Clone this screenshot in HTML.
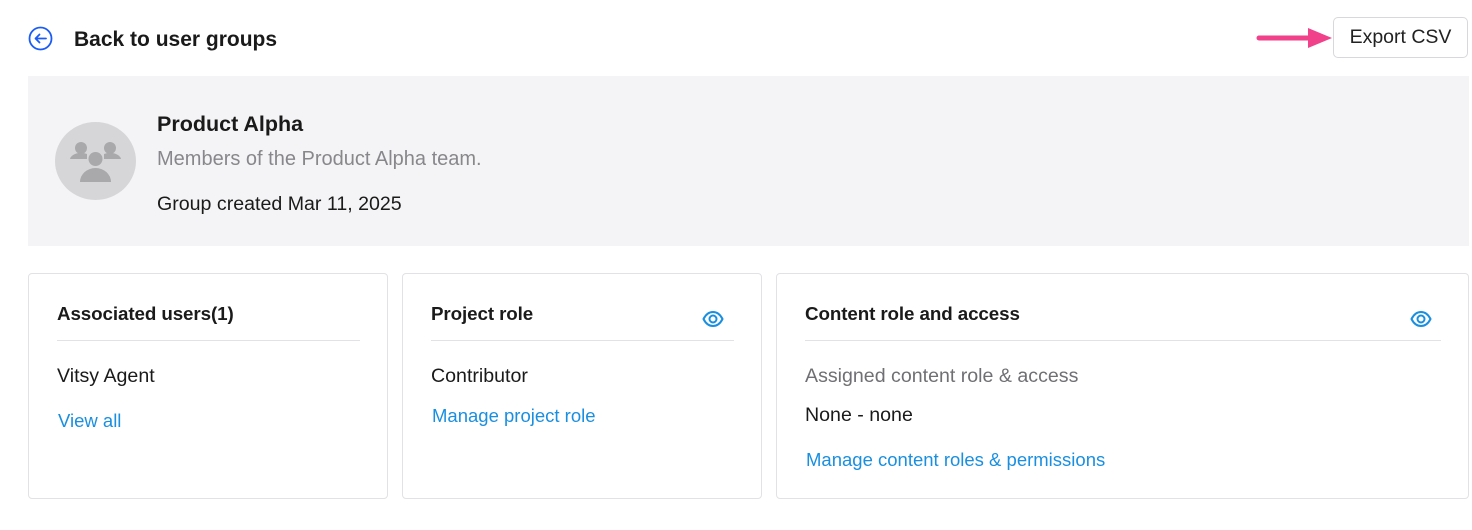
<!DOCTYPE html>
<html><head><style>
body{margin:0;width:1472px;height:530px;background:#fff;font-family:"Liberation Sans",sans-serif;color:#1a1a1a;position:relative;overflow:hidden}
.a{position:absolute}
.card{position:absolute;top:273px;height:226px;border:1px solid #e2e2e6;border-radius:4px;box-sizing:border-box;background:#fff}
.ct{position:absolute;left:28px;top:29px;font-size:18.8px;font-weight:bold;color:#1a1a1a;letter-spacing:-0.1px}
.hr{position:absolute;left:28px;right:27px;top:66px;border-top:1px solid #e2e2e6}
.t{position:absolute;font-size:19.6px}
.lk{position:absolute;font-size:18.5px;color:#1a8fe0}
.eye{position:absolute;top:36px}
</style></head><body>
<svg class="a" style="left:28px;top:26px" width="25" height="25" viewBox="0 0 25 25"><circle cx="12.5" cy="12.5" r="11" fill="none" stroke="#1b5cf5" stroke-width="1.8"/><path d="M18 12.5H7.5M11.5 8.5l-4 4 4 4" fill="none" stroke="#1b5cf5" stroke-width="1.8" stroke-linecap="round" stroke-linejoin="round"/></svg>
<div class="a" style="left:74px;top:28px;font-size:21px;font-weight:bold">Back to user groups</div>
<svg class="a" style="left:1255px;top:25px" width="80" height="26"><path d="M4 13H58" stroke="#f0418a" stroke-width="5" stroke-linecap="round"/><path d="M53 3L77 13L53 23Z" fill="#f0418a"/></svg>
<div class="a" style="left:1333px;top:17px;width:135px;height:41px;border:1px solid #d8d8dc;border-radius:5px;box-sizing:border-box;font-size:19.5px;text-align:center;line-height:39px;color:#222">Export CSV</div>
<div class="a" style="left:28px;top:76px;width:1441px;height:170px;background:#f4f4f6"></div>
<div class="a" style="left:55px;top:122px;width:81px;height:78px;border-radius:50%;background:#d6d6d8"></div>
<svg class="a" style="left:55px;top:122px" width="81" height="78" viewBox="0 0 81 78"><g fill="#a9a9ab"><circle cx="26" cy="26" r="6"/><circle cx="55" cy="26" r="6"/><path d="M15 37a11 7 0 0 1 17-5v5z"/><path d="M49 32a11 7 0 0 1 17 5H49z"/><circle cx="40.5" cy="37" r="7"/><path d="M25 60a15.5 14 0 0 1 31 0z"/></g></svg>
<div class="a" style="left:157px;top:112px;font-size:21.5px;font-weight:bold">Product Alpha</div>
<div class="a" style="left:157px;top:148px;font-size:20px;color:#88888c">Members of the Product Alpha team.</div>
<div class="a" style="left:157px;top:193px;font-size:19.6px">Group created Mar 11, 2025</div>

<div class="card" style="left:28px;width:360px"><div class="ct">Associated users(1)</div><div class="hr"></div>
<div class="t" style="left:28px;top:91px">Vitsy Agent</div><div class="lk" style="left:29px;top:136px">View all</div></div>

<div class="card" style="left:402px;width:360px"><div class="ct">Project role</div><div class="hr"></div>
<svg class="eye" style="left:299px" width="22" height="18" viewBox="0 0 22 18"><path d="M1.5 9C4 4 7.5 2 11 2s7 2 9.5 7c-2.5 5-6 7-9.5 7S4 14 1.5 9z" fill="none" stroke="#1a8fe0" stroke-width="2"/><circle cx="11" cy="9" r="3.5" fill="none" stroke="#1a8fe0" stroke-width="2"/></svg>
<div class="t" style="left:28px;top:91px">Contributor</div><div class="lk" style="left:29px;top:131px">Manage project role</div></div>

<div class="card" style="left:776px;width:693px"><div class="ct">Content role and access</div><div class="hr"></div>
<svg class="eye" style="left:633px" width="22" height="18" viewBox="0 0 22 18"><path d="M1.5 9C4 4 7.5 2 11 2s7 2 9.5 7c-2.5 5-6 7-9.5 7S4 14 1.5 9z" fill="none" stroke="#1a8fe0" stroke-width="2"/><circle cx="11" cy="9" r="3.5" fill="none" stroke="#1a8fe0" stroke-width="2"/></svg>
<div class="t" style="left:28px;top:91px;color:#707074">Assigned content role &amp; access</div>
<div class="t" style="left:28px;top:130px">None - none</div>
<div class="lk" style="left:29px;top:175px">Manage content roles &amp; permissions</div></div>
</body></html>
